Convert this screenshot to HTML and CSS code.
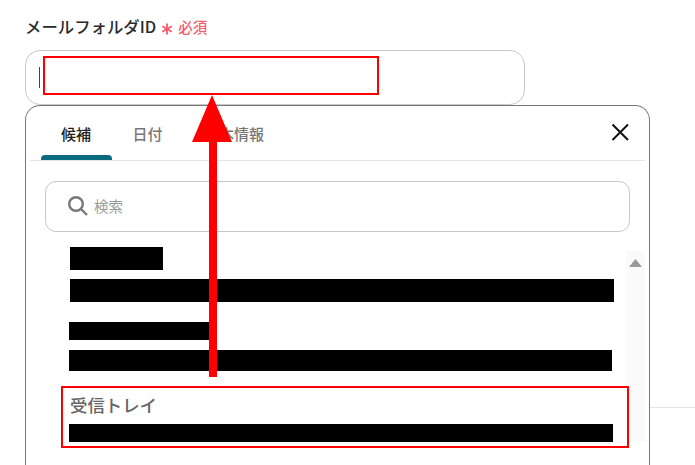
FILE: index.html
```html
<!DOCTYPE html>
<html lang="ja">
<head>
  <meta charset="UTF-8">
  <title>メールフォルダID</title>
  <link rel="stylesheet" href="styles.css">
</head>
<body>
  <div class="page-rule"></div>

  <div class="field">
    <div class="field-label">
      <span class="label-text">メールフォルダID</span>
      <svg class="required-mark" width="12" height="12" viewBox="0 0 12 12">
        <path d="M6 0.5V11.5M1.2 3.2L10.8 8.8M10.8 3.2L1.2 8.8" />
      </svg>
      <span class="required-text">必須</span>
    </div>
    <div class="field-input"><span class="caret"></span></div>
  </div>

  <div class="panel">
    <div class="panel-head">
      <div class="tabs">
        <div class="tab active">候補</div>
        <div class="tab">日付</div>
        <div class="tab">基本情報</div>
      </div>
      <svg class="close-icon" width="18" height="18" viewBox="0 0 18 18">
        <path d="M1.5 1.5L17 17M17 1.5L1.5 17" />
      </svg>
    </div>

    <div class="search">
      <svg class="search-icon" width="20" height="20" viewBox="0 0 20 20">
        <circle cx="8" cy="8" r="6.8" />
        <path d="M13 13L19 19" />
      </svg>
      <span class="search-text">検索</span>
    </div>

    <div class="results">
      <div class="items">
        <div class="item item-a">
          <div class="mask mask-title"></div>
          <div class="mask mask-id"></div>
        </div>
        <div class="item item-b">
          <div class="mask mask-title"></div>
          <div class="mask mask-id"></div>
        </div>
        <div class="item item-c">
          <div class="item-name">受信トレイ</div>
          <div class="mask mask-id"></div>
        </div>
      </div>
      <div class="scrollbar">
        <svg width="13" height="8" viewBox="0 0 13 8"><path d="M6.5 0L13 8H0Z" /></svg>
      </div>
    </div>
  </div>

  <!-- 注釈 -->
  <svg class="notes" width="695" height="465" viewBox="0 0 695 465">
    <rect x="44" y="57" width="334" height="37" />
    <rect x="62" y="387" width="566" height="60" />
    <path class="arrow" d="M212 95L232 142H217V377H209V142H192Z" />
  </svg>
</body>
</html>
```

FILE: styles.css
```css
html, body {
  margin: 0;
  padding: 0;
  height: 465px;
  overflow: hidden;
  background: #fff;
}
body {
  position: relative;
  font-family: "Noto Sans CJK JP", "Noto Sans", sans-serif;
  color: #2b2b2b;
}

.page-rule {
  position: absolute;
  left: 650px;
  right: 0;
  top: 407px;
  height: 1px;
  background: #e6e6e6;
}

.field {
  padding: 15px 0 0 25px;
}
.field-label {
  display: flex;
  align-items: center;
  height: 22px;
  margin-bottom: 13px;
}
.label-text {
  font-size: 16.4px;
  font-weight: 500;
  color: #2b2b2b;
}
.required-mark {
  margin: 5px 0 0 5px;
}
.required-mark path {
  fill: none;
  stroke: #f55a6e;
  stroke-width: 1.8;
}
.required-text {
  margin-left: 5px;
  font-size: 14.5px;
  font-weight: 500;
  color: #f55a6e;
}
.field-input {
  box-sizing: border-box;
  display: flex;
  align-items: center;
  width: 500px;
  height: 55px;
  padding-left: 13px;
  border: 1px solid #c8c8c8;
  border-radius: 15px;
}
.caret {
  width: 1px;
  height: 21px;
  background: #444;
}

.panel {
  box-sizing: border-box;
  position: relative;
  width: 625px;
  height: 360px;
  margin-left: 25px;
  padding: 0 4px;
  background: #fff;
  border: 1px solid #777;
  border-bottom: 0;
  border-radius: 15px 15px 0 0;
}
.panel-head {
  display: flex;
  align-items: center;
  justify-content: space-between;
  height: 54px;
  padding: 0 16px 0 11px;
  border-bottom: 1px solid #e6e6e6;
}
.tabs {
  display: flex;
  gap: 1.5px;
}
.tab {
  position: relative;
  height: 54px;
  padding: 0 20px;
  font-size: 15px;
  font-weight: 500;
  line-height: 55px;
  color: #777;
}
.tab.active {
  color: #222;
}
.tab.active::after {
  content: '';
  position: absolute;
  left: 0;
  right: -1px;
  bottom: 0;
  height: 5px;
  background: #0b6a80;
  border-radius: 4px 4px 0 0;
}
.close-icon {
  margin-top: -3px;
}
.close-icon path {
  fill: none;
  stroke: #111;
  stroke-width: 2;
}

.search {
  box-sizing: border-box;
  display: flex;
  align-items: center;
  height: 51px;
  margin: 20px 15px 0;
  padding-left: 22px;
  border: 1px solid #c8c8c8;
  border-radius: 11px;
}
.search-icon {
  margin: -2px 6px 0 0;
}
.search-icon circle,
.search-icon path {
  fill: none;
  stroke: #777;
  stroke-width: 2.4;
}
.search-text {
  font-size: 14.5px;
  line-height: 20px;
  color: #999;
  margin-top: -2px;
}

.results {
  display: flex;
}
.items {
  flex: 1;
  padding: 15px 12px 0 40px;
}
.mask {
  background: #000;
}
.item-a .mask-title {
  width: 93px;
  height: 23px;
}
.item-a .mask-id {
  width: 544px;
  height: 23px;
  margin-top: 9px;
}
.item-b {
  margin: 20px 0 0 -1px;
}
.item-b .mask-title {
  width: 140px;
  height: 18px;
}
.item-b .mask-id {
  width: 543px;
  height: 21px;
  margin-top: 10px;
}
.item-c {
  margin: 20px 0 0 -1px;
}
.item-name {
  height: 33px;
  padding-left: 1px;
  font-size: 17.4px;
  font-weight: 500;
  line-height: 27px;
  color: #666;
}
.item-c .mask-id {
  width: 544px;
  height: 18px;
}
.scrollbar {
  display: flex;
  justify-content: center;
  width: 19px;
  margin-top: 19px;
  padding-top: 8px;
  background: #fafafa;
}
.scrollbar svg {
  fill: #999;
}

.notes {
  position: absolute;
  left: 0;
  top: 0;
}
.notes rect {
  fill: none;
  stroke: #f00;
  stroke-width: 2;
}
.notes .arrow {
  fill: #f00;
}
```
